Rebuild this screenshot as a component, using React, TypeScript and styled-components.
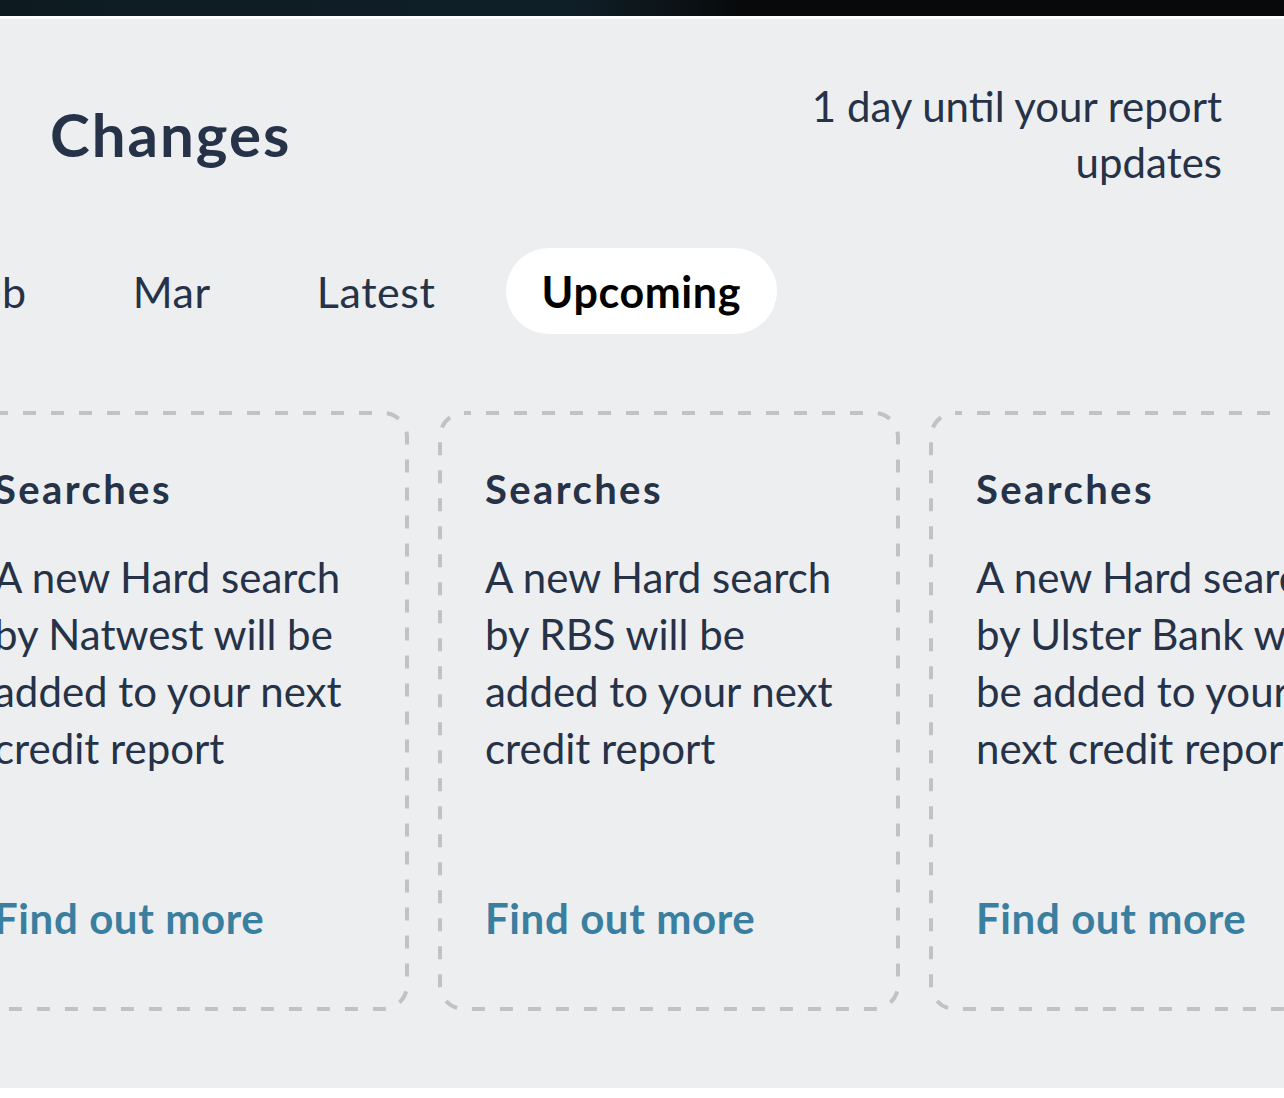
import { useEffect, useRef } from 'react';
import styled, { createGlobalStyle } from 'styled-components';

const tabs = ['Dec', 'Jan', 'Feb', 'Mar', 'Latest', 'Upcoming'];
const activeTab = 'Upcoming';

const changes = [
  { title: 'Searches', lender: 'Natwest' },
  { title: 'Searches', lender: 'RBS' },
  { title: 'Searches', lender: 'Ulster Bank' },
  { title: 'Searches', lender: 'Lloyds Bank' },
];

// dashed outline drawn as an svg background so the dash length matches
const dashed =
  "url(\"data:image/svg+xml,%3csvg xmlns='http://www.w3.org/2000/svg' width='100%25' height='100%25'%3e%3crect x='2' y='2' width='458' height='596' fill='none' rx='24' ry='24' stroke='%23C0C2C6' stroke-width='4' stroke-dasharray='13%2c15' stroke-dashoffset='6'/%3e%3c/svg%3e\")";

function App() {
  const cardsRef = useRef<HTMLDivElement>(null);

  useEffect(() => {
    if (cardsRef.current) {
      cardsRef.current.scrollLeft = 103;
    }
  }, []);

  return (
    <>
      <GlobalStyle />
      <TopBar />
      <Section>
        <Header>
          <Title>Changes</Title>
          <Countdown>
            1 day until your report
            <br />
            updates
          </Countdown>
        </Header>

        <TabList>
          {tabs.map((t) => (
            <Tab key={t} $active={t === activeTab}>
              {t}
            </Tab>
          ))}
        </TabList>

        <CardRow ref={cardsRef}>
          {changes.map((c, i) => (
            <Card key={i}>
              <CardTitle>{c.title}</CardTitle>
              <CardText>
                A new Hard search by {c.lender} will be added to your next credit report
              </CardText>
              <CardLink>Find out more</CardLink>
            </Card>
          ))}
        </CardRow>
      </Section>
    </>
  );
}

const GlobalStyle = createGlobalStyle`
  body {
    margin: 0;
    background: #ffffff;
    font-family: Lato, 'Open Sans', sans-serif;
  }
`;

const TopBar = styled.div`
  height: 16px;
  background: linear-gradient(90deg, #0d1b21 0%, #0f1f28 44%, #0c1418 52%, #07090b 58%, #08090b 100%);
  margin-bottom: 3px;
`;

const Section = styled.div`
  background: #edeef0;
  padding: 59px 0 77px;
  display: flex;
  flex-direction: column;
  color: #253247;
`;

const Header = styled.div`
  display: flex;
  align-items: center;
  justify-content: space-between;
  padding: 0 62px 0 50px;
`;

const Title = styled.h1`
  margin: 0;
  font-size: 60px;
  font-weight: 700;
  line-height: 1;
  letter-spacing: 2px;
`;

const Countdown = styled.div`
  font-size: 42px;
  line-height: 56px;
  text-align: right;
`;

const TabList = styled.div`
  box-sizing: border-box;
  width: 777px;
  display: flex;
  justify-content: flex-end;
  gap: 34px;
  margin-top: 58px;
  overflow: hidden;
`;

const Tab = styled.button<{ $active: boolean }>`
  flex: none;
  height: 86px;
  padding: 0 36px;
  border: none;
  border-radius: 43px;
  background: ${(p) => (p.$active ? '#ffffff' : 'transparent')};
  color: ${(p) => (p.$active ? '#000000' : '#253247')};
  font-family: Lato, sans-serif;
  font-size: 43px;
  letter-spacing: 0.6px;
  font-weight: ${(p) => (p.$active ? 700 : 400)};
`;

const CardRow = styled.div`
  display: flex;
  gap: 29px;
  margin-top: 77px;
  padding-left: 50px;
  overflow-x: auto;
  scrollbar-width: none;

  &::-webkit-scrollbar {
    display: none;
  }
`;

const Card = styled.div`
  flex: none;
  box-sizing: border-box;
  width: 462px;
  height: 600px;
  padding: 54px 44px 64px 47px;
  background-image: ${dashed};
  display: flex;
  flex-direction: column;
`;

const CardTitle = styled.h2`
  margin: 0;
  font-size: 40px;
  font-weight: 700;
  line-height: 48px;
  letter-spacing: 2.4px;
`;

const CardText = styled.p`
  margin: 36px 0 0;
  font-size: 42px;
  line-height: 57px;
`;

const CardLink = styled.a`
  margin-top: auto;
  font-size: 42px;
  font-weight: 700;
  line-height: 57px;
  letter-spacing: 0.6px;
  color: #3a7fa0;
  cursor: pointer;
`;

export default App;
